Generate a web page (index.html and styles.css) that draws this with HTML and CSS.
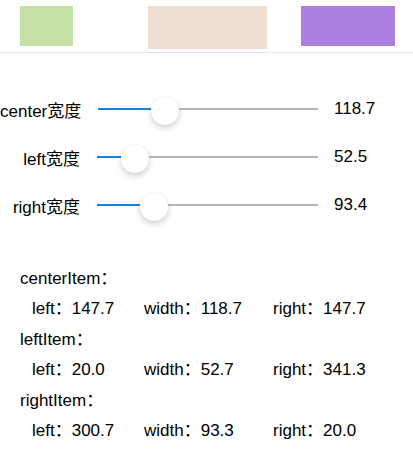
FILE: index.html
```html
<!DOCTYPE html>
<html lang="zh-CN">
<head>
    <meta charset="UTF-8">
    <meta name="viewport" content="width=device-width, initial-scale=1.0">
    <title>布局示例</title>
    <link rel="stylesheet" href="styles.css">
</head>
<body>
    <div class="topbar">
        <div class="item item-left"></div>
        <div class="item item-center"></div>
        <div class="item item-right"></div>
    </div>

    <div class="sliders">
        <div class="slider-row">
            <div class="label">center宽度</div>
            <div class="track">
                <div class="fill" style="width: 53px"></div>
                <div class="thumb"></div>
                <div class="rest"></div>
            </div>
            <div class="value">118.7</div>
        </div>
        <div class="slider-row">
            <div class="label">left宽度</div>
            <div class="track">
                <div class="fill" style="width: 24px"></div>
                <div class="thumb"></div>
                <div class="rest"></div>
            </div>
            <div class="value">52.5</div>
        </div>
        <div class="slider-row">
            <div class="label">right宽度</div>
            <div class="track">
                <div class="fill" style="width: 43px"></div>
                <div class="thumb"></div>
                <div class="rest"></div>
            </div>
            <div class="value">93.4</div>
        </div>
    </div>

    <div class="info">
        <div class="group">
            <div class="title">centerItem：</div>
            <div class="cells">
                <span>left：147.7</span>
                <span>width：118.7</span>
                <span>right：147.7</span>
            </div>
        </div>
        <div class="group">
            <div class="title">leftItem：</div>
            <div class="cells">
                <span>left：20.0</span>
                <span>width：52.7</span>
                <span>right：341.3</span>
            </div>
        </div>
        <div class="group">
            <div class="title">rightItem：</div>
            <div class="cells">
                <span>left：300.7</span>
                <span>width：93.3</span>
                <span>right：20.0</span>
            </div>
        </div>
    </div>
</body>
</html>
```

FILE: styles.css
```css
body {
    margin: 0;
    background-color: #ffffff;
    color: #000000;
    font-family: "Liberation Sans", "Noto Sans CJK SC", sans-serif;
    font-size: 17px;
}
.topbar {
    display: flex;
    align-items: center;
    height: 52px;
    border-bottom: 1px solid #e6e6ea;
}
.item {
    height: 40px;
}
.item-left {
    margin-left: 20px;
    width: 53px;
    background-color: #c4e1a6;
}
.item-center {
    margin-left: 75px;
    width: 119px;
    height: 43px;
    margin-top: 2px;
    background-color: #f0dfd0;
}
.item-right {
    margin-left: 34px;
    width: 94px;
    background-color: #ac80e1;
}
.sliders {
    padding-top: 32px;
}
.slider-row {
    display: flex;
    align-items: center;
    height: 48px;
}
.label {
    min-width: 80px;
    text-align: right;
    margin-right: 17px;
    white-space: nowrap;
}
.track {
    flex: 1;
    display: flex;
    align-items: center;
    height: 28px;
}
.fill {
    height: 2px;
    background-color: #1a7ee8;
}
.thumb {
    width: 28px;
    height: 28px;
    border-radius: 50%;
    background-color: #ffffff;
    box-shadow: 0 3px 6px rgba(0, 0, 0, 0.18), 0 0 1px rgba(0, 0, 0, 0.12);
    flex: none;
    position: relative;
    top: 2px;
}
.rest {
    flex: 1;
    height: 2px;
    background-color: #b6b6b6;
}
.value {
    width: 60px;
    margin-left: 16px;
    margin-right: 19px;
}
.info {
    padding-top: 35px;
}
.group {
    padding-left: 20px;
}
.title {
    height: 29px;
    line-height: 29px;
}
.cells {
    display: grid;
    grid-template-columns: 112px 129px auto;
    padding-left: 12px;
    height: 32px;
    line-height: 32px;
}
```
